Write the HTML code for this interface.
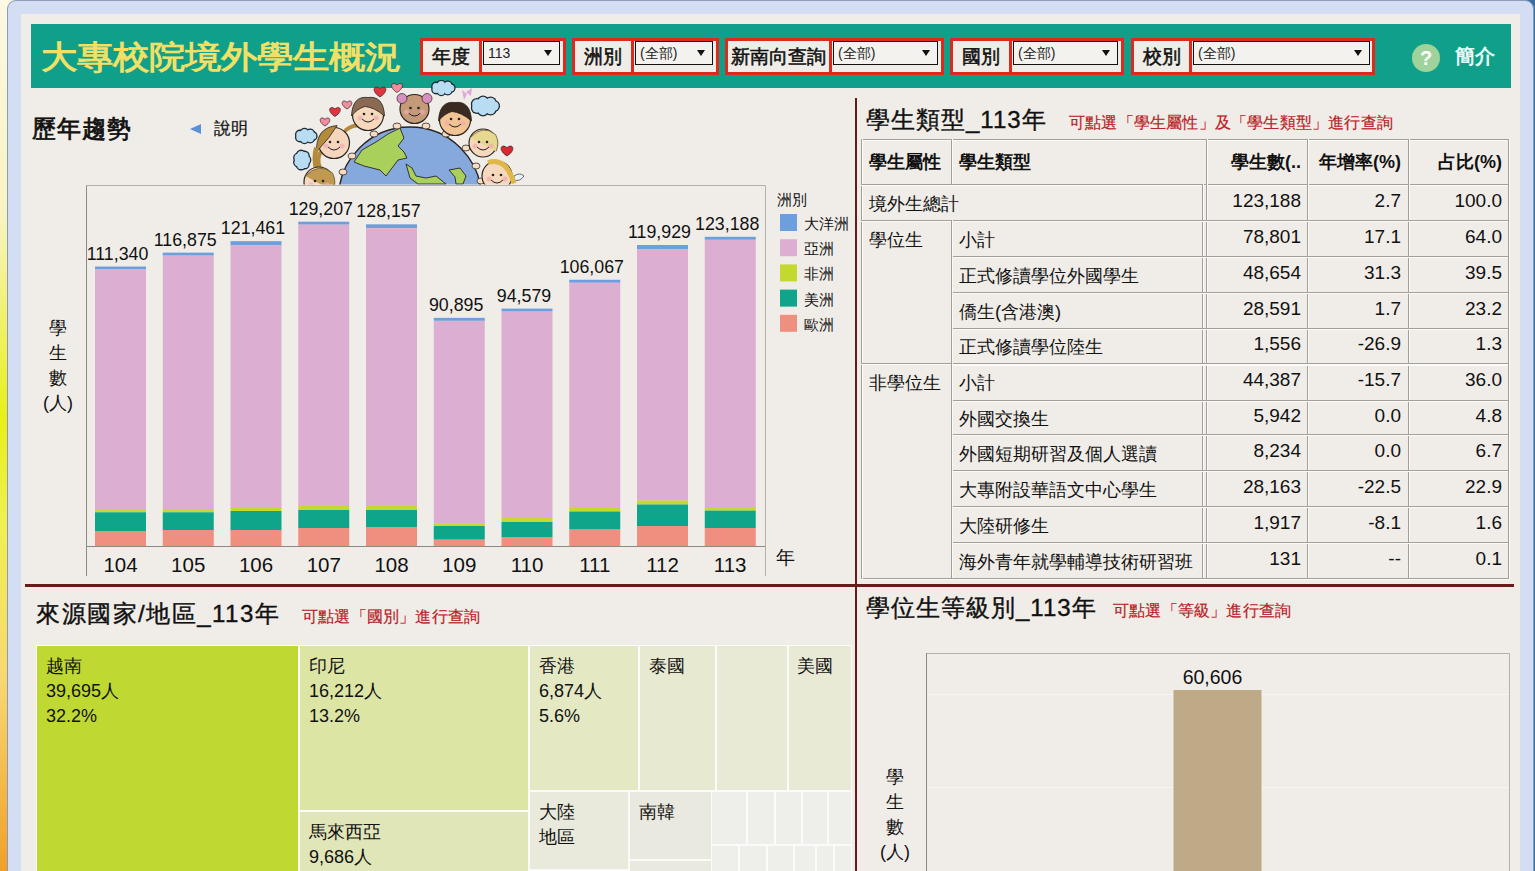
<!DOCTYPE html>
<html><head><meta charset="utf-8">
<style>
*{box-sizing:border-box;margin:0;padding:0}
html,body{width:1535px;height:871px;overflow:hidden}
body{position:relative;font-family:"Liberation Sans",sans-serif;color:#111;background:#f6f0b0}
.a{position:absolute;white-space:nowrap}
#desk{left:0;top:0;width:30px;height:871px;background:linear-gradient(#fcf8e4 0%,#f8f4c0 25%,#e8f018 48%,#f0f050 60%,#f8d870 78%,#f0a028 100%)}
#win{left:7px;top:0;width:1527px;height:900px;background:#d3ddf3;border:1px solid #8d9bb8;border-radius:9px 9px 0 0}
#content{left:21px;top:14px;width:1499px;height:857px;background:#f0ede8}
#hdr{left:31px;top:24px;width:1480px;height:64px;background:#10a08a}
#title{left:41px;top:33px;font-size:36px;font-weight:bold;color:#f2e066;line-height:44px;transform:scaleY(0.88);transform-origin:0 39px}
.fg{top:38px;height:37px;border:3px solid #dc2a1f;background:#f0ede8}
.fl{position:absolute;top:0;left:0;height:31px;border-right:3px solid #dc2a1f;font-size:18.5px;-webkit-text-stroke:0.55px #111;text-align:center;line-height:31px;white-space:nowrap}
.fs{position:absolute;top:0px;height:24px;border:1px solid #111;background:#f4f2ee;font-size:14px;line-height:22px;padding-left:4px;white-space:nowrap;color:#222}
.fs i{position:absolute;right:7px;top:7.5px;width:0;height:0;border-left:4px solid transparent;border-right:4px solid transparent;border-top:6px solid #111}
.div{background:#6a1a1a}
.ttl{font-size:24px;line-height:30px;-webkit-text-stroke:0.4px #111;letter-spacing:1px}
.note{font-size:16px;color:#b92226;line-height:20px;-webkit-text-stroke:0.2px #b92226;letter-spacing:0.2px}
.t18{font-size:18px;line-height:22px}
.vl{font-size:17.8px;line-height:20px;text-align:center;width:80px}
.yl{font-size:20.5px;line-height:22px;text-align:center;width:60px}
.lg{font-size:14.5px;line-height:18px}
.tb{font-size:18.3px;line-height:22px}
.tn{font-size:19px;line-height:22px}
.tbh{font-size:18px;line-height:22px;font-weight:bold}
.r{text-align:right}
.tm{font-size:18px;line-height:25px}
</style></head>
<body>
<div class="a" style="left:1500px;top:0;width:35px;height:871px;background:#3a6ea0"></div><div class="a" id="desk"></div><div class="a" id="win"></div><div class="a" id="content"></div><div class="a" id="hdr"></div>
<div class="a" id="title">大專校院境外學生概況</div>
<div class="a fg" style="left:420px;width:146px"><div class="fl" style="width:59px">年度</div><div class="fs" style="left:60px;width:77px">113<i></i></div></div>
<div class="a fg" style="left:572px;width:147px"><div class="fl" style="width:59px">洲別</div><div class="fs" style="left:60px;width:78px">(全部)<i></i></div></div>
<div class="a fg" style="left:725px;width:219px"><div class="fl" style="width:104px">新南向查詢</div><div class="fs" style="left:105px;width:105px">(全部)<i></i></div></div>
<div class="a fg" style="left:950px;width:174px"><div class="fl" style="width:59px">國別</div><div class="fs" style="left:60px;width:105px">(全部)<i></i></div></div>
<div class="a fg" style="left:1131px;width:244px"><div class="fl" style="width:58px">校別</div><div class="fs" style="left:59px;width:177px">(全部)<i></i></div></div>
<div class="a" style="left:1412px;top:44px;width:28px;height:28px;border-radius:50%;background:#9fd39b;color:#fff;font-weight:bold;font-size:20px;text-align:center;line-height:28px">?</div>
<div class="a" style="left:1455px;top:43px;font-size:20px;font-weight:bold;color:#e8fbf6;line-height:26px">簡介</div>
<div class="a div" style="left:855px;top:98px;width:2px;height:773px"></div>
<div class="a div" style="left:25px;top:584px;width:1489px;height:3px"></div>
<div class="a ttl" style="left:32px;top:114px;-webkit-text-stroke:0.8px #111">歷年趨勢</div>
<div class="a" style="left:190px;top:124px;width:0;height:0;border-top:5.5px solid transparent;border-bottom:5.5px solid transparent;border-right:11px solid #5b8fd6"></div>
<div class="a" style="left:214px;top:117px;font-size:16.5px;line-height:22px;-webkit-text-stroke:0.2px #111">說明</div>
<svg class="a" style="left:0;top:0" width="1535" height="871"><path d="M86.5 185.5H765.5V576" fill="none" stroke="#b4b0aa" stroke-width="1"/><path d="M86.5 185.5V576" fill="none" stroke="#8c8884" stroke-width="1"/><path d="M86 546.5H765" fill="none" stroke="#8c8884" stroke-width="1"/><rect x="95.00" y="266.54" width="51" height="3" fill="#6c9fdd"/><rect x="95.00" y="269.54" width="51" height="240.46" fill="#dbaed2"/><rect x="95.00" y="510.00" width="51" height="2.30" fill="#c4d82f"/><rect x="95.00" y="512.30" width="51" height="18.70" fill="#0ea58a"/><rect x="95.00" y="531.00" width="51" height="15.00" fill="#ee8f7f"/><rect x="162.75" y="252.64" width="51" height="3" fill="#6c9fdd"/><rect x="162.75" y="255.64" width="51" height="254.36" fill="#dbaed2"/><rect x="162.75" y="510.00" width="51" height="2.30" fill="#c4d82f"/><rect x="162.75" y="512.30" width="51" height="17.70" fill="#0ea58a"/><rect x="162.75" y="530.00" width="51" height="16.00" fill="#ee8f7f"/><rect x="230.50" y="241.13" width="51" height="4" fill="#6c9fdd"/><rect x="230.50" y="245.13" width="51" height="262.87" fill="#dbaed2"/><rect x="230.50" y="508.00" width="51" height="3.00" fill="#c4d82f"/><rect x="230.50" y="511.00" width="51" height="19.00" fill="#0ea58a"/><rect x="230.50" y="530.00" width="51" height="16.00" fill="#ee8f7f"/><rect x="298.25" y="221.69" width="51" height="3" fill="#6c9fdd"/><rect x="298.25" y="224.69" width="51" height="281.31" fill="#dbaed2"/><rect x="298.25" y="506.00" width="51" height="4.00" fill="#c4d82f"/><rect x="298.25" y="510.00" width="51" height="18.00" fill="#0ea58a"/><rect x="298.25" y="528.00" width="51" height="18.00" fill="#ee8f7f"/><rect x="366.00" y="224.33" width="51" height="4" fill="#6c9fdd"/><rect x="366.00" y="228.33" width="51" height="277.67" fill="#dbaed2"/><rect x="366.00" y="506.00" width="51" height="4.00" fill="#c4d82f"/><rect x="366.00" y="510.00" width="51" height="17.00" fill="#0ea58a"/><rect x="366.00" y="527.00" width="51" height="19.00" fill="#ee8f7f"/><rect x="433.75" y="317.85" width="51" height="3" fill="#6c9fdd"/><rect x="433.75" y="320.85" width="51" height="202.95" fill="#dbaed2"/><rect x="433.75" y="523.80" width="51" height="2.20" fill="#c4d82f"/><rect x="433.75" y="526.00" width="51" height="13.70" fill="#0ea58a"/><rect x="433.75" y="539.70" width="51" height="6.30" fill="#ee8f7f"/><rect x="501.50" y="308.61" width="51" height="3" fill="#6c9fdd"/><rect x="501.50" y="311.61" width="51" height="206.39" fill="#dbaed2"/><rect x="501.50" y="518.00" width="51" height="4.00" fill="#c4d82f"/><rect x="501.50" y="522.00" width="51" height="15.00" fill="#0ea58a"/><rect x="501.50" y="537.00" width="51" height="9.00" fill="#ee8f7f"/><rect x="569.25" y="279.77" width="51" height="3" fill="#6c9fdd"/><rect x="569.25" y="282.77" width="51" height="225.23" fill="#dbaed2"/><rect x="569.25" y="508.00" width="51" height="3.50" fill="#c4d82f"/><rect x="569.25" y="511.50" width="51" height="18.10" fill="#0ea58a"/><rect x="569.25" y="529.60" width="51" height="16.40" fill="#ee8f7f"/><rect x="637.00" y="244.98" width="51" height="4" fill="#6c9fdd"/><rect x="637.00" y="248.98" width="51" height="251.52" fill="#dbaed2"/><rect x="637.00" y="500.50" width="51" height="4.00" fill="#c4d82f"/><rect x="637.00" y="504.50" width="51" height="21.50" fill="#0ea58a"/><rect x="637.00" y="526.00" width="51" height="20.00" fill="#ee8f7f"/><rect x="704.75" y="236.80" width="51" height="3" fill="#6c9fdd"/><rect x="704.75" y="239.80" width="51" height="267.20" fill="#dbaed2"/><rect x="704.75" y="507.00" width="51" height="3.60" fill="#c4d82f"/><rect x="704.75" y="510.60" width="51" height="17.40" fill="#0ea58a"/><rect x="704.75" y="528.00" width="51" height="18.00" fill="#ee8f7f"/><rect x="780" y="214.0" width="17" height="17" fill="#6c9fdd"/><rect x="780" y="239.2" width="17" height="17" fill="#dbaed2"/><rect x="780" y="264.4" width="17" height="17" fill="#c4d82f"/><rect x="780" y="289.6" width="17" height="17" fill="#0ea58a"/><rect x="780" y="314.8" width="17" height="17" fill="#ee8f7f"/></svg>
<div class="a vl" style="left:77.5px;top:243.5px">111,340</div>
<div class="a yl" style="left:90.5px;top:554px">104</div>
<div class="a vl" style="left:145.2px;top:229.6px">116,875</div>
<div class="a yl" style="left:158.2px;top:554px">105</div>
<div class="a vl" style="left:213.0px;top:218.1px">121,461</div>
<div class="a yl" style="left:226.0px;top:554px">106</div>
<div class="a vl" style="left:280.8px;top:198.7px">129,207</div>
<div class="a yl" style="left:293.8px;top:554px">107</div>
<div class="a vl" style="left:348.5px;top:201.3px">128,157</div>
<div class="a yl" style="left:361.5px;top:554px">108</div>
<div class="a vl" style="left:416.2px;top:294.9px">90,895</div>
<div class="a yl" style="left:429.2px;top:554px">109</div>
<div class="a vl" style="left:484.0px;top:285.6px">94,579</div>
<div class="a yl" style="left:497.0px;top:554px">110</div>
<div class="a vl" style="left:551.8px;top:256.8px">106,067</div>
<div class="a yl" style="left:564.8px;top:554px">111</div>
<div class="a vl" style="left:619.5px;top:222.0px">119,929</div>
<div class="a yl" style="left:632.5px;top:554px">112</div>
<div class="a vl" style="left:687.2px;top:213.8px">123,188</div>
<div class="a yl" style="left:700.2px;top:554px">113</div>
<div class="a" style="left:776px;top:547px;font-size:19px;line-height:22px">年</div>
<div class="a" style="left:28px;top:317px;width:60px;text-align:center;font-size:18px;line-height:22px">學</div>
<div class="a" style="left:28px;top:342px;width:60px;text-align:center;font-size:18px;line-height:22px">生</div>
<div class="a" style="left:28px;top:367px;width:60px;text-align:center;font-size:18px;line-height:22px">數</div>
<div class="a" style="left:28px;top:392px;width:60px;text-align:center;font-size:18px;line-height:22px">(人)</div>
<div class="a lg" style="left:777px;top:191px">洲別</div>
<div class="a lg" style="left:804px;top:215.0px">大洋洲</div>
<div class="a lg" style="left:804px;top:240.2px">亞洲</div>
<div class="a lg" style="left:804px;top:265.4px">非洲</div>
<div class="a lg" style="left:804px;top:290.6px">美洲</div>
<div class="a lg" style="left:804px;top:315.8px">歐洲</div>
<svg class="a" style="left:0;top:0" width="1535" height="871"><defs><clipPath id="cl"><rect x="280" y="80" width="260" height="104.5"/></clipPath></defs><g clip-path="url(#cl)"><circle cx="312.7" cy="136.0" r="4.9" fill="#1e2a35"/><circle cx="310.2" cy="138.6" r="4.9" fill="#1e2a35"/><circle cx="304.5" cy="139.3" r="4.9" fill="#1e2a35"/><circle cx="299.9" cy="137.5" r="4.9" fill="#1e2a35"/><circle cx="299.9" cy="134.5" r="4.9" fill="#1e2a35"/><circle cx="304.5" cy="132.7" r="4.9" fill="#1e2a35"/><circle cx="310.2" cy="133.4" r="4.9" fill="#1e2a35"/><ellipse cx="306" cy="136" rx="8.9" ry="4.9" fill="#1e2a35"/><circle cx="312.7" cy="136.0" r="3.6" fill="#b8dcf2"/><circle cx="310.2" cy="138.6" r="3.6" fill="#b8dcf2"/><circle cx="304.5" cy="139.3" r="3.6" fill="#b8dcf2"/><circle cx="299.9" cy="137.5" r="3.6" fill="#b8dcf2"/><circle cx="299.9" cy="134.5" r="3.6" fill="#b8dcf2"/><circle cx="304.5" cy="132.7" r="3.6" fill="#b8dcf2"/><circle cx="310.2" cy="133.4" r="3.6" fill="#b8dcf2"/><ellipse cx="306" cy="136" rx="7.6" ry="3.6" fill="#b8dcf2"/><circle cx="306.2" cy="160.0" r="5.2" fill="#1e2a35"/><circle cx="304.6" cy="164.2" r="5.2" fill="#1e2a35"/><circle cx="301.1" cy="165.2" r="5.2" fill="#1e2a35"/><circle cx="298.3" cy="162.3" r="5.2" fill="#1e2a35"/><circle cx="298.3" cy="157.7" r="5.2" fill="#1e2a35"/><circle cx="301.1" cy="154.8" r="5.2" fill="#1e2a35"/><circle cx="304.6" cy="155.8" r="5.2" fill="#1e2a35"/><ellipse cx="302" cy="160" rx="6.0" ry="7.0" fill="#1e2a35"/><circle cx="306.2" cy="160.0" r="3.9" fill="#b8dcf2"/><circle cx="304.6" cy="164.2" r="3.9" fill="#b8dcf2"/><circle cx="301.1" cy="165.2" r="3.9" fill="#b8dcf2"/><circle cx="298.3" cy="162.3" r="3.9" fill="#b8dcf2"/><circle cx="298.3" cy="157.7" r="3.9" fill="#b8dcf2"/><circle cx="301.1" cy="154.8" r="3.9" fill="#b8dcf2"/><circle cx="304.6" cy="155.8" r="3.9" fill="#b8dcf2"/><ellipse cx="302" cy="160" rx="4.7" ry="5.7" fill="#b8dcf2"/><circle cx="450.7" cy="88.0" r="4.9" fill="#1e2a35"/><circle cx="447.8" cy="90.6" r="4.9" fill="#1e2a35"/><circle cx="441.3" cy="91.3" r="4.9" fill="#1e2a35"/><circle cx="436.1" cy="89.5" r="4.9" fill="#1e2a35"/><circle cx="436.1" cy="86.5" r="4.9" fill="#1e2a35"/><circle cx="441.3" cy="84.7" r="4.9" fill="#1e2a35"/><circle cx="447.8" cy="85.4" r="4.9" fill="#1e2a35"/><ellipse cx="443" cy="88" rx="9.9" ry="4.9" fill="#1e2a35"/><circle cx="450.7" cy="88.0" r="3.6" fill="#b8dcf2"/><circle cx="447.8" cy="90.6" r="3.6" fill="#b8dcf2"/><circle cx="441.3" cy="91.3" r="3.6" fill="#b8dcf2"/><circle cx="436.1" cy="89.5" r="3.6" fill="#b8dcf2"/><circle cx="436.1" cy="86.5" r="3.6" fill="#b8dcf2"/><circle cx="441.3" cy="84.7" r="3.6" fill="#b8dcf2"/><circle cx="447.8" cy="85.4" r="3.6" fill="#b8dcf2"/><ellipse cx="443" cy="88" rx="8.6" ry="3.6" fill="#b8dcf2"/><circle cx="494.0" cy="106.0" r="6.1" fill="#1e2a35"/><circle cx="490.6" cy="109.5" r="6.1" fill="#1e2a35"/><circle cx="483.0" cy="110.4" r="6.1" fill="#1e2a35"/><circle cx="476.9" cy="107.9" r="6.1" fill="#1e2a35"/><circle cx="476.9" cy="104.1" r="6.1" fill="#1e2a35"/><circle cx="483.0" cy="101.6" r="6.1" fill="#1e2a35"/><circle cx="490.6" cy="102.5" r="6.1" fill="#1e2a35"/><ellipse cx="485" cy="106" rx="11.4" ry="6.1" fill="#1e2a35"/><circle cx="494.0" cy="106.0" r="4.8" fill="#b8dcf2"/><circle cx="490.6" cy="109.5" r="4.8" fill="#b8dcf2"/><circle cx="483.0" cy="110.4" r="4.8" fill="#b8dcf2"/><circle cx="476.9" cy="107.9" r="4.8" fill="#b8dcf2"/><circle cx="476.9" cy="104.1" r="4.8" fill="#b8dcf2"/><circle cx="483.0" cy="101.6" r="4.8" fill="#b8dcf2"/><circle cx="490.6" cy="102.5" r="4.8" fill="#b8dcf2"/><ellipse cx="485" cy="106" rx="10.1" ry="4.8" fill="#b8dcf2"/><path d="M380 96.95 C370.1 90.9 374.5 83.75 380 88.7 C385.5 83.75 389.9 90.9 380 96.95Z" fill="#e03540" stroke="#3a2020" stroke-width="0.7"/><path d="M397 92.5 C388.0 87.0 392.0 80.5 397 85.0 C402.0 80.5 406.0 87.0 397 92.5Z" fill="#ee8ea0" stroke="#3a2020" stroke-width="0.7"/><path d="M335 116.5 C326.0 111.0 330.0 104.5 335 109.0 C340.0 104.5 344.0 111.0 335 116.5Z" fill="#e03540" stroke="#3a2020" stroke-width="0.7"/><path d="M347 109.05 C338.9 104.1 342.5 98.25 347 102.3 C351.5 98.25 355.1 104.1 347 109.05Z" fill="#ee8ea0" stroke="#3a2020" stroke-width="0.7"/><path d="M325 126.05 C316.9 121.1 320.5 115.25 325 119.3 C329.5 115.25 333.1 121.1 325 126.05Z" fill="#ee8ea0" stroke="#3a2020" stroke-width="0.7"/><path d="M507 155.95 C497.1 149.9 501.5 142.75 507 147.7 C512.5 142.75 516.9 149.9 507 155.95Z" fill="#d92830" stroke="#3a2020" stroke-width="0.7"/><path d="M462 90 l5 4 l-3 6z M466 92 l6 -4 l-1 8z" fill="#e0a8d8"/><circle cx="410" cy="198.5" r="71.5" fill="#86a9dd" stroke="#2a2522" stroke-width="1.4"/><path d="M354 162 L362 150 L376 142 L388 134 L400 128 L404 138 L398 146 L404 152 L407 158 L398 160 L392 168 L386 176 L380 170 L372 168 L364 166Z" fill="#a9d05a" stroke="#2a2522" stroke-width="0.9"/><path d="M406 164 L412 168 L416 176 L426 178 L436 176 L446 184 L418 184 L410 178Z" fill="#a9d05a" stroke="#2a2522" stroke-width="0.9"/><path d="M449 170 L460 168 L466 176 L463 184 L456 184 L455 177Z" fill="#a9d05a" stroke="#2a2522" stroke-width="0.9"/><ellipse cx="352" cy="156" rx="4" ry="3" fill="#f6dcc4" stroke="#3a2a22" stroke-width="0.8"/><ellipse cx="374" cy="134" rx="4" ry="3" fill="#f6dcc4" stroke="#3a2a22" stroke-width="0.8"/><ellipse cx="397" cy="126" rx="4" ry="3" fill="#f6dcc4" stroke="#3a2a22" stroke-width="0.8"/><ellipse cx="426" cy="126" rx="4" ry="3" fill="#f6dcc4" stroke="#3a2a22" stroke-width="0.8"/><ellipse cx="446" cy="134" rx="4" ry="3" fill="#f6dcc4" stroke="#3a2a22" stroke-width="0.8"/><ellipse cx="466" cy="148" rx="4" ry="3" fill="#f6dcc4" stroke="#3a2a22" stroke-width="0.8"/><ellipse cx="476" cy="166" rx="4" ry="3" fill="#f6dcc4" stroke="#3a2a22" stroke-width="0.8"/><ellipse cx="481" cy="181" rx="4" ry="3" fill="#f6dcc4" stroke="#3a2a22" stroke-width="0.8"/><ellipse cx="343" cy="172" rx="4" ry="3" fill="#f6dcc4" stroke="#3a2a22" stroke-width="0.8"/><path d="M322 150 q-6 8 -2 18 M346 130 q8 -6 14 -4" fill="none" stroke="#b48a3c" stroke-width="4" stroke-linecap="round"/><path d="M514 176 q6 -4 10 0 q-4 6 -10 4z" fill="#e8f2fa" stroke="#333" stroke-width="0.7"/><circle cx="368" cy="115" r="15.5" fill="#f6d8bd" stroke="#2a2522" stroke-width="1.2"/><path d="M351.5 116 Q352.5 95.5 368 97.5 Q383.5 95.5 384.5 116 Q374.2 107.25 364.9 106.475 Q357.15 108.8 351.5 116Z" fill="#8a6a52" stroke="#2a2522" stroke-width="0.8"/><circle cx="364" cy="114" r="1.3" fill="#222"/><circle cx="372" cy="114" r="1.3" fill="#222"/><path d="M362 119 Q368 125 374 119" fill="none" stroke="#222" stroke-width="1"/><circle cx="360" cy="118" r="2.5" fill="#f2a8b0" opacity="0.7"/><circle cx="376" cy="118" r="2.5" fill="#f2a8b0" opacity="0.7"/><circle cx="334" cy="143" r="15.5" fill="#f6d5bd" stroke="#2a2522" stroke-width="1.2"/><path d="M316.5 152.3 Q315.5 127.5 337.1 125.5 Q329.35 138.35 321.5 146.1Z" fill="#b48a3c" stroke="#2a2522" stroke-width="0.8"/><path d="M316.5 147.65 q-3 10 0 22" fill="none" stroke="#b48a3c" stroke-width="5"/><circle cx="330" cy="142" r="1.3" fill="#222"/><circle cx="338" cy="142" r="1.3" fill="#222"/><path d="M328 147 Q334 153 340 147" fill="none" stroke="#222" stroke-width="1"/><circle cx="326" cy="146" r="2.5" fill="#f2a8b0" opacity="0.7"/><circle cx="342" cy="146" r="2.5" fill="#f2a8b0" opacity="0.7"/><circle cx="319" cy="182" r="15" fill="#f6d8bd" stroke="#2a2522" stroke-width="1.2"/><path d="M305.5 176.0 Q319 162 332.5 173.0 Q337 182 333 191.0" fill="#c09a50" stroke="#6b5a30" stroke-width="0.8"/><circle cx="315" cy="181" r="1.3" fill="#222"/><circle cx="323" cy="181" r="1.3" fill="#222"/><path d="M313 186 Q319 192 325 186" fill="none" stroke="#222" stroke-width="1"/><circle cx="311" cy="185" r="2.5" fill="#f2a8b0" opacity="0.7"/><circle cx="327" cy="185" r="2.5" fill="#f2a8b0" opacity="0.7"/><circle cx="414.5" cy="109" r="14.5" fill="#c49a78" stroke="#2a2522" stroke-width="1.2"/><circle cx="402.0" cy="98.5" r="5" fill="#d88fc0" stroke="#2a2522" stroke-width="0.7"/><circle cx="427.0" cy="98.5" r="5" fill="#d88fc0" stroke="#2a2522" stroke-width="0.7"/><circle cx="410.5" cy="108" r="1.3" fill="#222"/><circle cx="418.5" cy="108" r="1.3" fill="#222"/><path d="M408.5 113 Q414.5 119 420.5 113" fill="none" stroke="#222" stroke-width="1"/><circle cx="406.5" cy="112" r="2.5" fill="#f2a8b0" opacity="0.7"/><circle cx="422.5" cy="112" r="2.5" fill="#f2a8b0" opacity="0.7"/><circle cx="455" cy="120" r="15.5" fill="#f2c493" stroke="#2a2522" stroke-width="1.2"/><path d="M438.5 121 Q439.5 100.5 455 102.5 Q470.5 100.5 471.5 121 Q461.2 112.25 451.9 111.475 Q444.15 113.8 438.5 121Z" fill="#3a2a20" stroke="#2a2522" stroke-width="0.8"/><circle cx="451" cy="119" r="1.3" fill="#222"/><circle cx="459" cy="119" r="1.3" fill="#222"/><path d="M449 124 Q455 130 461 124" fill="none" stroke="#222" stroke-width="1"/><circle cx="447" cy="123" r="2.5" fill="#f2a8b0" opacity="0.7"/><circle cx="463" cy="123" r="2.5" fill="#f2a8b0" opacity="0.7"/><circle cx="483" cy="143" r="14" fill="#f6d8bd" stroke="#2a2522" stroke-width="1.2"/><path d="M470.4 137.4 Q483 124 495.6 134.6 Q500 143 496 151.4" fill="#e6d890" stroke="#6b5a30" stroke-width="0.8"/><circle cx="479" cy="142" r="1.3" fill="#222"/><circle cx="487" cy="142" r="1.3" fill="#222"/><path d="M477 147 Q483 153 489 147" fill="none" stroke="#222" stroke-width="1"/><circle cx="475" cy="146" r="2.5" fill="#f2a8b0" opacity="0.7"/><circle cx="491" cy="146" r="2.5" fill="#f2a8b0" opacity="0.7"/><circle cx="497" cy="176" r="15" fill="#f6d8bd" stroke="#2a2522" stroke-width="1.2"/><path d="M488.0 162.5 Q506.0 156.5 514 183.5" fill="none" stroke="#e0b848" stroke-width="5"/><circle cx="493" cy="175" r="1.3" fill="#222"/><circle cx="501" cy="175" r="1.3" fill="#222"/><path d="M491 180 Q497 186 503 180" fill="none" stroke="#222" stroke-width="1"/><circle cx="489" cy="179" r="2.5" fill="#f2a8b0" opacity="0.7"/><circle cx="505" cy="179" r="2.5" fill="#f2a8b0" opacity="0.7"/></g></svg>
<div class="a ttl" style="left:866px;top:105px">學生類型_113年</div>
<div class="a note" style="left:1069px;top:113px">可點選「學生屬性」及「學生類型」進行查詢</div>
<svg class="a" style="left:0;top:0" width="1535" height="871"><rect x="861" y="139" width="648" height="1" fill="#a29e99"/><rect x="861" y="140" width="648" height="1" fill="#fbfaf7"/><rect x="861" y="578" width="648" height="1" fill="#a29e99"/><rect x="861" y="579" width="648" height="1" fill="#fbfaf7"/><rect x="861" y="139" width="1" height="440" fill="#a29e99"/><rect x="862" y="139" width="1" height="440" fill="#fbfaf7"/><rect x="1508" y="139" width="1" height="440" fill="#a29e99"/><rect x="1509" y="139" width="1" height="440" fill="#fbfaf7"/><rect x="861" y="184" width="647" height="1" fill="#a29e99"/><rect x="861" y="185" width="647" height="1" fill="#fbfaf7"/><rect x="951" y="139" width="1" height="45" fill="#a29e99"/><rect x="952" y="139" width="1" height="45" fill="#fbfaf7"/><rect x="1206" y="139" width="1" height="439" fill="#a29e99"/><rect x="1207" y="139" width="1" height="439" fill="#fbfaf7"/><rect x="1307" y="139" width="1" height="439" fill="#a29e99"/><rect x="1308" y="139" width="1" height="439" fill="#fbfaf7"/><rect x="1408" y="139" width="1" height="439" fill="#a29e99"/><rect x="1409" y="139" width="1" height="439" fill="#fbfaf7"/><rect x="1202" y="184" width="1" height="394" fill="#a29e99"/><rect x="1203" y="184" width="1" height="394" fill="#fbfaf7"/><rect x="861" y="220" width="647" height="1" fill="#a29e99"/><rect x="861" y="221" width="647" height="1" fill="#fbfaf7"/><rect x="951" y="256" width="557" height="1" fill="#a29e99"/><rect x="951" y="257" width="557" height="1" fill="#fbfaf7"/><rect x="951" y="292" width="557" height="1" fill="#a29e99"/><rect x="951" y="293" width="557" height="1" fill="#fbfaf7"/><rect x="951" y="328" width="557" height="1" fill="#a29e99"/><rect x="951" y="329" width="557" height="1" fill="#fbfaf7"/><rect x="951" y="364" width="557" height="1" fill="#a29e99"/><rect x="951" y="365" width="557" height="1" fill="#fbfaf7"/><rect x="951" y="400" width="557" height="1" fill="#a29e99"/><rect x="951" y="401" width="557" height="1" fill="#fbfaf7"/><rect x="951" y="434" width="557" height="1" fill="#a29e99"/><rect x="951" y="435" width="557" height="1" fill="#fbfaf7"/><rect x="951" y="470" width="557" height="1" fill="#a29e99"/><rect x="951" y="471" width="557" height="1" fill="#fbfaf7"/><rect x="951" y="506" width="557" height="1" fill="#a29e99"/><rect x="951" y="507" width="557" height="1" fill="#fbfaf7"/><rect x="951" y="542" width="557" height="1" fill="#a29e99"/><rect x="951" y="543" width="557" height="1" fill="#fbfaf7"/><rect x="861" y="363" width="647" height="1" fill="#a29e99"/><rect x="861" y="364" width="647" height="1" fill="#fbfaf7"/><rect x="951" y="220" width="1" height="358" fill="#a29e99"/><rect x="952" y="220" width="1" height="358" fill="#fbfaf7"/></svg>
<div class="a tbh" style="left:869px;top:150.5px">學生屬性</div>
<div class="a tbh" style="left:959px;top:150.5px">學生類型</div>
<div class="a tbh r" style="left:1100px;width:201px;top:150.5px">學生數(..</div>
<div class="a tbh r" style="left:1200px;width:201px;top:150.5px">年增率(%)</div>
<div class="a tbh r" style="left:1300px;width:202px;top:150.5px">占比(%)</div>
<div class="a tb" style="left:869px;top:192.8px">境外生總計</div>
<div class="a tn r" style="left:1100px;width:201px;top:189.8px">123,188</div>
<div class="a tn r" style="left:1200px;width:201px;top:189.8px">2.7</div>
<div class="a tn r" style="left:1300px;width:202px;top:189.8px">100.0</div>
<div class="a tb" style="left:959px;top:228.8px">小計</div>
<div class="a tn r" style="left:1100px;width:201px;top:225.8px">78,801</div>
<div class="a tn r" style="left:1200px;width:201px;top:225.8px">17.1</div>
<div class="a tn r" style="left:1300px;width:202px;top:225.8px">64.0</div>
<div class="a tb" style="left:959px;top:264.5px">正式修讀學位外國學生</div>
<div class="a tn r" style="left:1100px;width:201px;top:261.5px">48,654</div>
<div class="a tn r" style="left:1200px;width:201px;top:261.5px">31.3</div>
<div class="a tn r" style="left:1300px;width:202px;top:261.5px">39.5</div>
<div class="a tb" style="left:959px;top:300.5px">僑生(含港澳)</div>
<div class="a tn r" style="left:1100px;width:201px;top:297.5px">28,591</div>
<div class="a tn r" style="left:1200px;width:201px;top:297.5px">1.7</div>
<div class="a tn r" style="left:1300px;width:202px;top:297.5px">23.2</div>
<div class="a tb" style="left:959px;top:336.2px">正式修讀學位陸生</div>
<div class="a tn r" style="left:1100px;width:201px;top:333.2px">1,556</div>
<div class="a tn r" style="left:1200px;width:201px;top:333.2px">-26.9</div>
<div class="a tn r" style="left:1300px;width:202px;top:333.2px">1.3</div>
<div class="a tb" style="left:959px;top:372.0px">小計</div>
<div class="a tn r" style="left:1100px;width:201px;top:369.0px">44,387</div>
<div class="a tn r" style="left:1200px;width:201px;top:369.0px">-15.7</div>
<div class="a tn r" style="left:1300px;width:202px;top:369.0px">36.0</div>
<div class="a tb" style="left:959px;top:407.5px">外國交換生</div>
<div class="a tn r" style="left:1100px;width:201px;top:404.5px">5,942</div>
<div class="a tn r" style="left:1200px;width:201px;top:404.5px">0.0</div>
<div class="a tn r" style="left:1300px;width:202px;top:404.5px">4.8</div>
<div class="a tb" style="left:959px;top:442.8px">外國短期研習及個人選讀</div>
<div class="a tn r" style="left:1100px;width:201px;top:439.8px">8,234</div>
<div class="a tn r" style="left:1200px;width:201px;top:439.8px">0.0</div>
<div class="a tn r" style="left:1300px;width:202px;top:439.8px">6.7</div>
<div class="a tb" style="left:959px;top:478.8px">大專附設華語文中心學生</div>
<div class="a tn r" style="left:1100px;width:201px;top:475.8px">28,163</div>
<div class="a tn r" style="left:1200px;width:201px;top:475.8px">-22.5</div>
<div class="a tn r" style="left:1300px;width:202px;top:475.8px">22.9</div>
<div class="a tb" style="left:959px;top:514.8px">大陸研修生</div>
<div class="a tn r" style="left:1100px;width:201px;top:511.8px">1,917</div>
<div class="a tn r" style="left:1200px;width:201px;top:511.8px">-8.1</div>
<div class="a tn r" style="left:1300px;width:202px;top:511.8px">1.6</div>
<div class="a tb" style="left:959px;top:550.5px">海外青年就學輔導技術研習班</div>
<div class="a tn r" style="left:1100px;width:201px;top:547.5px">131</div>
<div class="a tn r" style="left:1200px;width:201px;top:547.5px">--</div>
<div class="a tn r" style="left:1300px;width:202px;top:547.5px">0.1</div>
<div class="a tb" style="left:869px;top:228.8px">學位生</div>
<div class="a tb" style="left:869px;top:372.0px">非學位生</div>
<div class="a" style="left:36px;top:645px;width:816px;height:226px;background:#fbfbf9"></div>
<div class="a ttl" style="left:36px;top:599px;letter-spacing:1.5px">來源國家/地區_113年</div>
<div class="a note" style="left:302px;top:607px">可點選「國別」進行查詢</div>
<div class="a" style="left:37px;top:646px;width:261px;height:225px;background:#c0d932"></div>
<div class="a" style="left:300px;top:646px;width:228px;height:164px;background:#dde5a5"></div>
<div class="a" style="left:300px;top:812px;width:228px;height:59px;background:#e1e6b8"></div>
<div class="a" style="left:530px;top:646px;width:108px;height:144px;background:#e4e9c4"></div>
<div class="a" style="left:640px;top:646px;width:75px;height:144px;background:#e7ead0"></div>
<div class="a" style="left:717px;top:646px;width:70px;height:144px;background:#e8ead6"></div>
<div class="a" style="left:789px;top:646px;width:62px;height:144px;background:#e8ead6"></div>
<div class="a" style="left:530px;top:792px;width:98px;height:77px;background:#e9eadb"></div>
<div class="a" style="left:630px;top:792px;width:81px;height:67px;background:#eae9df"></div>
<div class="a" style="left:630px;top:861px;width:81px;height:10px;background:#eae9df"></div>
<div class="a" style="left:712px;top:792px;width:34px;height:52px;background:#eeeeea"></div>
<div class="a" style="left:748px;top:792px;width:26px;height:52px;background:#eeeeea"></div>
<div class="a" style="left:776px;top:792px;width:25px;height:52px;background:#eeeeea"></div>
<div class="a" style="left:803px;top:792px;width:24px;height:52px;background:#eeeeea"></div>
<div class="a" style="left:829px;top:792px;width:22px;height:52px;background:#eeeeea"></div>
<div class="a" style="left:712px;top:846px;width:26px;height:25px;background:#eeeeea"></div>
<div class="a" style="left:740px;top:846px;width:26px;height:25px;background:#eeeeea"></div>
<div class="a" style="left:768px;top:846px;width:25px;height:25px;background:#eeeeea"></div>
<div class="a" style="left:795px;top:846px;width:20px;height:25px;background:#eeeeea"></div>
<div class="a" style="left:817px;top:846px;width:16px;height:25px;background:#eeeeea"></div>
<div class="a" style="left:835px;top:846px;width:16px;height:25px;background:#eeeeea"></div>
<div class="a tm" style="left:46px;top:654px">越南<br>39,695人<br>32.2%</div>
<div class="a tm" style="left:309px;top:654px">印尼<br>16,212人<br>13.2%</div>
<div class="a tm" style="left:539px;top:654px">香港<br>6,874人<br>5.6%</div>
<div class="a tm" style="left:649px;top:654px">泰國</div>
<div class="a tm" style="left:797px;top:654px">美國</div>
<div class="a tm" style="left:309px;top:820px">馬來西亞<br>9,686人</div>
<div class="a tm" style="left:539px;top:800px">大陸<br>地區</div>
<div class="a tm" style="left:639px;top:800px">南韓</div>
<div class="a ttl" style="left:866px;top:593px">學位生等級別_113年</div>
<div class="a note" style="left:1113px;top:601px">可點選「等級」進行查詢</div>
<svg class="a" style="left:0;top:0" width="1535" height="871"><path d="M926.5 871V653.5H1509.5V871" fill="none" stroke="#b4b0aa" stroke-width="1"/><path d="M926.5 653V871" stroke="#8c8884" stroke-width="1"/><rect x="928" y="694" width="581" height="1" fill="#f7f5f1"/><rect x="928" y="787" width="581" height="1" fill="#f7f5f1"/><rect x="1173.5" y="690" width="88" height="181" fill="#bfaa88"/></svg>
<div class="a vl" style="left:1172.5px;top:667px;font-size:19.5px">60,606</div>
<div class="a" style="left:865px;top:765.5px;width:60px;text-align:center;font-size:18px;line-height:22px">學</div>
<div class="a" style="left:865px;top:790.5px;width:60px;text-align:center;font-size:18px;line-height:22px">生</div>
<div class="a" style="left:865px;top:815.5px;width:60px;text-align:center;font-size:18px;line-height:22px">數</div>
<div class="a" style="left:865px;top:840.5px;width:60px;text-align:center;font-size:18px;line-height:22px">(人)</div>
</body></html>
